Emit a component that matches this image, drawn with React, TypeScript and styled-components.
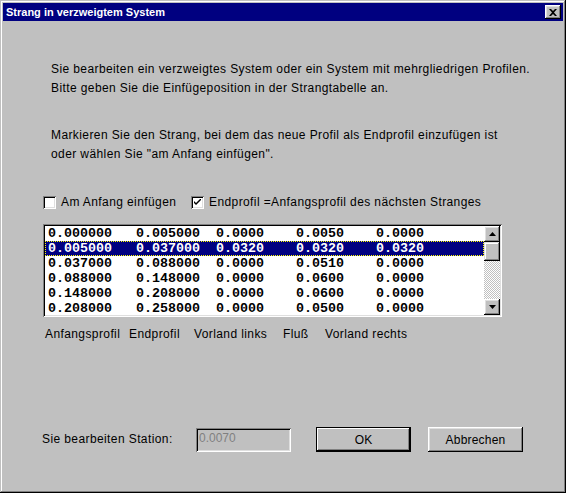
import React from "react";
import styled, { createGlobalStyle } from "styled-components";

const Global = createGlobalStyle`
  html, body { margin: 0; padding: 0; background: #c0c0c0; }
  body { font-family: "Liberation Sans", Arial, sans-serif; }
`;

const Window = styled.div`
  width: 566px;
  height: 493px;
  box-sizing: border-box;
  padding: 3px;
  background: #c0c0c0;
  box-shadow: inset -1px -1px #000, inset 1px 1px #c0c0c0, inset -2px -2px #808080, inset 2px 2px #fff;
  display: flex;
  flex-direction: column;
  color: #000;
`;

const TitleBar = styled.div`
  height: 18px;
  background: #000080;
  display: flex;
  align-items: center;
  justify-content: space-between;
  padding: 0 2px 0 3px;
`;

const TitleText = styled.span`
  color: #fff;
  font: bold 11px "Liberation Sans", Arial, sans-serif;
`;

const RaisedButton = styled.button<{ $default?: boolean }>`
  box-sizing: border-box;
  background: #c0c0c0;
  border: none;
  padding: 0;
  margin: 0;
  font: 12px "Liberation Sans", Arial, sans-serif;
  letter-spacing: 0.2px;
  color: #000;
  display: flex;
  align-items: center;
  justify-content: center;
  box-shadow: ${(p) =>
    p.$default
      ? "inset 0 0 0 1px #000, inset -2px -2px #000, inset 2px 2px #fff, inset -3px -3px #808080"
      : "inset -1px -1px #000, inset 1px 1px #fff, inset -2px -2px #808080, inset 2px 2px #dfdfdf"};
`;

const CloseButton = styled(RaisedButton)`
  width: 16px;
  height: 14px;
`;

const DialogButton = styled(RaisedButton)`
  width: 95px;
  height: 25px;
`;

const Body = styled.div`
  flex: 1;
  display: flex;
  flex-direction: column;
  padding-left: 40px;
  font: 12px "Liberation Sans", Arial, sans-serif;
  letter-spacing: 0.4px;
`;

const Intro = styled.div`
  margin-top: 39px;
  margin-left: 8px;
  display: flex;
  flex-direction: column;
  gap: 28px;
`;

const Para = styled.p`
  margin: 0;
  line-height: 19px;
`;

const CheckRow = styled.div`
  margin-top: 32px;
  display: flex;
  align-items: center;
  height: 13px;
`;

const CheckItem = styled.label<{ $width?: number }>`
  display: flex;
  align-items: center;
  gap: 5px;
  line-height: 13px;
  width: ${(p) => (p.$width ? `${p.$width}px` : "auto")};
`;

const CheckBox = styled.span`
  width: 13px;
  height: 13px;
  box-sizing: border-box;
  background: #fff;
  box-shadow: inset 1px 1px #808080, inset -1px -1px #fff, inset 2px 2px #000, inset -2px -2px #dfdfdf;
  display: flex;
  align-items: center;
  justify-content: center;
`;

const ListBox = styled.div`
  margin-top: 15px;
  width: 459px;
  height: 93px;
  box-sizing: border-box;
  padding: 2px;
  background: #fff;
  box-shadow: inset 1px 1px #808080, inset -1px -1px #fff, inset 2px 2px #000, inset -2px -2px #dfdfdf;
  display: flex;
  letter-spacing: 0;
`;

const Rows = styled.div`
  flex: 1;
  overflow: hidden;
`;

const Row = styled.div<{ $selected?: boolean }>`
  height: 15px;
  line-height: 15px;
  padding-left: 3px;
  white-space: pre;
  font: bold 13.333px "Liberation Mono", "DejaVu Sans Mono", monospace;
  background: ${(p) => (p.$selected ? "#000080" : "transparent")};
  color: ${(p) => (p.$selected ? "#fff" : "#000")};
  outline: ${(p) => (p.$selected ? "1px dotted #ffff00" : "none")};
  outline-offset: -1px;
`;

const ScrollBar = styled.div`
  width: 16px;
  display: flex;
  flex-direction: column;
`;

const ScrollButton = styled(RaisedButton)`
  width: 16px;
  height: 16px;
`;

const Thumb = styled.div`
  height: 19px;
  background: #c0c0c0;
  box-shadow: inset -1px -1px #000, inset 1px 1px #dfdfdf, inset -2px -2px #808080, inset 2px 2px #fff;
`;

const Track = styled.div`
  flex: 1;
  background-color: #fff;
  background-image: conic-gradient(#c0c0c0 25%, #fff 25% 50%, #c0c0c0 50% 75%, #fff 75%);
  background-size: 2px 2px;
`;

const Headers = styled.div`
  margin-top: 11px;
  margin-left: 2px;
  display: flex;
  line-height: 13px;
`;

const HeaderCell = styled.span<{ $width?: number }>`
  width: ${(p) => (p.$width ? `${p.$width}px` : "auto")};
  flex: none;
`;

const Footer = styled.div`
  margin-top: 86px;
  margin-left: -1px;
  display: flex;
  align-items: flex-start;
  height: 25px;
`;

const FooterLabel = styled.span`
  width: 154px;
  padding-top: 6px;
  line-height: 13px;
`;

const StationInput = styled.div`
  margin-top: 1px;
  width: 95px;
  height: 24px;
  box-sizing: border-box;
  padding: 3px 0 0 3px;
  line-height: 14px;
  letter-spacing: 0;
  color: #808080;
  background: #c0c0c0;
  box-shadow: inset 1px 1px #808080, inset -1px -1px #fff, inset 2px 2px #000, inset -2px -2px #dfdfdf;
  margin-right: 25px;
`;

const ButtonGap = styled.div`
  width: 17px;
`;

const rows = [
  ["0.000000", "0.005000", "0.0000", "0.0050", "0.0000"],
  ["0.005000", "0.037000", "0.0320", "0.0320", "0.0320"],
  ["0.037000", "0.088000", "0.0000", "0.0510", "0.0000"],
  ["0.088000", "0.148000", "0.0000", "0.0600", "0.0000"],
  ["0.148000", "0.208000", "0.0000", "0.0600", "0.0000"],
  ["0.208000", "0.258000", "0.0000", "0.0500", "0.0000"],
];

const fmt = (r: string[]) =>
  r[0].padEnd(11) + r[1].padEnd(10) + r[2].padEnd(10) + r[3].padEnd(10) + r[4];

const CloseIcon = () => (
  <svg width="8" height="7" viewBox="0 0 8 7">
    <path d="M0 0H2L4 2L6 0H8L5 3.5L8 7H6L4 5L2 7H0L3 3.5Z" fill="#000" />
  </svg>
);

const Check = () => (
  <svg width="7" height="7" viewBox="0 0 7 7">
    <path d="M0 2V4L2 6L7 1V-1L2 4Z" fill="#000" />
  </svg>
);

const Arrow = ({ up }: { up?: boolean }) => (
  <svg width="7" height="4" viewBox="0 0 7 4">
    <path d={up ? "M3.5 0L7 4H0Z" : "M0 0H7L3.5 4Z"} fill="#000" />
  </svg>
);

export default function App() {
  return (
    <>
      <Global />
      <Window>
        <TitleBar>
          <TitleText>Strang in verzweigtem System</TitleText>
          <CloseButton>
            <CloseIcon />
          </CloseButton>
        </TitleBar>
        <Body>
          <Intro>
            <div>
              <Para>Sie bearbeiten ein verzweigtes System oder ein System mit mehrgliedrigen Profilen.</Para>
              <Para>Bitte geben Sie die Einfügeposition in der Strangtabelle an.</Para>
            </div>
            <div>
              <Para>Markieren Sie den Strang, bei dem das neue Profil als Endprofil einzufügen ist</Para>
              <Para>oder wählen Sie "am Anfang einfügen".</Para>
            </div>
          </Intro>
          <CheckRow>
            <CheckItem $width={148}>
              <CheckBox />
              Am Anfang einfügen
            </CheckItem>
            <CheckItem>
              <CheckBox>
                <Check />
              </CheckBox>
              Endprofil =Anfangsprofil des nächsten Stranges
            </CheckItem>
          </CheckRow>
          <ListBox>
            <Rows>
              {rows.map((r, i) => (
                <Row key={i} $selected={i === 1}>
                  {fmt(r)}
                </Row>
              ))}
            </Rows>
            <ScrollBar>
              <ScrollButton>
                <Arrow up />
              </ScrollButton>
              <Thumb />
              <Track />
              <ScrollButton>
                <Arrow />
              </ScrollButton>
            </ScrollBar>
          </ListBox>
          <Headers>
            <HeaderCell $width={84}>Anfangsprofil</HeaderCell>
            <HeaderCell $width={65}>Endprofil</HeaderCell>
            <HeaderCell $width={89}>Vorland links</HeaderCell>
            <HeaderCell $width={42}>Fluß</HeaderCell>
            <HeaderCell>Vorland rechts</HeaderCell>
          </Headers>
          <Footer>
            <FooterLabel>Sie bearbeiten Station:</FooterLabel>
            <StationInput>0.0070</StationInput>
            <DialogButton $default>OK</DialogButton>
            <ButtonGap />
            <DialogButton>Abbrechen</DialogButton>
          </Footer>
        </Body>
      </Window>
    </>
  );
}
